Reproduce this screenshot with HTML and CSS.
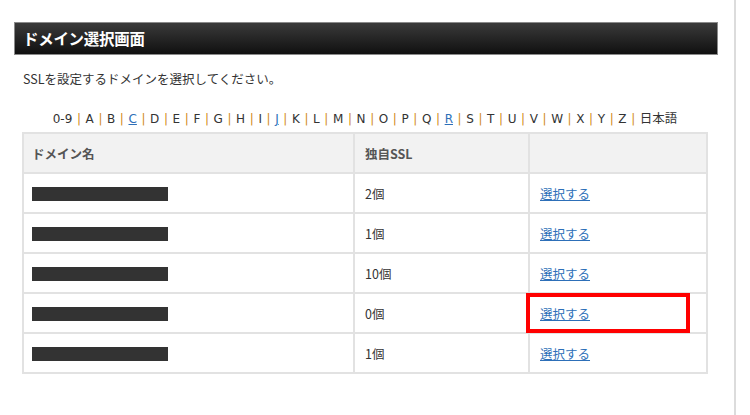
FILE: index.html
```html
<!DOCTYPE html>
<html lang="ja">
<head>
<meta charset="utf-8">
<title>ドメイン選択画面</title>
<link rel="stylesheet" href="styles.css">
</head>
<body>
<div class="page">
  <h1 class="title-bar">ドメイン選択画面</h1>
  <p class="lead">SSLを設定するドメインを選択してください。</p>
  <nav class="index-nav">
    <span>0-9</span><i>|</i><span>A</span><i>|</i><span>B</span><i>|</i><a href="#">C</a><i>|</i><span>D</span><i>|</i><span>E</span><i>|</i><span>F</span><i>|</i><span>G</span><i>|</i><span>H</span><i>|</i><span>I</span><i>|</i><a href="#">J</a><i>|</i><span>K</span><i>|</i><span>L</span><i>|</i><span>M</span><i>|</i><span>N</span><i>|</i><span>O</span><i>|</i><span>P</span><i>|</i><span>Q</span><i>|</i><a href="#">R</a><i>|</i><span>S</span><i>|</i><span>T</span><i>|</i><span>U</span><i>|</i><span>V</span><i>|</i><span>W</span><i>|</i><span>X</span><i>|</i><span>Y</span><i>|</i><span>Z</span><i>|</i><span>日本語</span>
  </nav>
  <table class="domain-table">
    <thead>
      <tr><th class="c1">ドメイン名</th><th class="c2">独自SSL</th><th class="c3"></th></tr>
    </thead>
    <tbody>
      <tr><td class="name"><span class="redact"></span></td><td>2個</td><td><a href="#">選択する</a></td></tr>
      <tr><td class="name"><span class="redact"></span></td><td>1個</td><td><a href="#">選択する</a></td></tr>
      <tr><td class="name"><span class="redact"></span></td><td>10個</td><td><a href="#">選択する</a></td></tr>
      <tr><td class="name"><span class="redact"></span></td><td>0個</td><td class="marked"><a href="#">選択する</a><span class="highlight"></span></td></tr>
      <tr><td class="name"><span class="redact"></span></td><td>1個</td><td><a href="#">選択する</a></td></tr>
    </tbody>
  </table>
</div>
</body>
</html>
```
FILE: styles.css
```css
html, body {
  margin: 0;
  padding: 0;
  background: #fff;
}
body {
  font-family: "DejaVu Sans", "Noto Sans CJK JP", sans-serif;
  color: #333;
  font-size: 13px;
}
.page {
  width: 736px;
  min-height: 415px;
  box-sizing: border-box;
  border-right: 2px solid #dcdcdc;
  padding: 22px 0 0 14px;
}
.title-bar {
  width: 704px;
  height: 33px;
  box-sizing: border-box;
  margin: 0;
  border: 1px solid #8a8a8a;
  background: linear-gradient(#3a3a3a, #101010);
  color: #fff;
  font-family: "Noto Sans CJK JP", sans-serif;
  font-size: 15.5px;
  font-weight: 700;
  line-height: 31px;
  padding-left: 8px;
  letter-spacing: -0.3px;
}
.lead {
  margin: 14px 0 0 9px;
  font-family: "Noto Sans CJK JP", sans-serif;
  font-size: 12.5px;
  line-height: 20px;
  color: #333;
}
.index-nav {
  width: 686px;
  margin: 19px 0 0 8px;
  text-align: center;
  font-size: 12px;
  line-height: 20px;
  color: #333;
  white-space: nowrap;
}
.index-nav i {
  font-style: normal;
  color: #d08a20;
  margin: 0 4.6px;
}
.index-nav span:last-child {
  font-family: "Noto Sans CJK JP", sans-serif;
  font-size: 12.5px;
}
.index-nav a {
  color: #2d6fb8;
}
.domain-table {
  width: 686px;
  margin: 3px 0 0 8px;
  border-collapse: collapse;
  border: 2px solid #e2e2e2;
  font-family: "Noto Sans CJK JP", sans-serif;
  font-size: 12.5px;
}
.domain-table th,
.domain-table td {
  border: 2px solid #e2e2e2;
  height: 38px;
  padding: 0 0 0 10px;
  text-align: left;
  vertical-align: middle;
}
.domain-table th.c1,
.domain-table td.name {
  padding-left: 8px;
}
.domain-table th {
  background: #f2f2f2;
  font-weight: 700;
  color: #555;
}
.c1 { width: 321px; }
.c2 { width: 163px; }
.domain-table td a {
  color: #2d6fb8;
}
.redact {
  display: block;
  width: 136px;
  height: 14px;
  margin-top: 2px;
  background: #333;
}
.marked {
  position: relative;
}
.highlight {
  position: absolute;
  left: -4px;
  top: -1px;
  width: 164px;
  height: 40px;
  box-sizing: border-box;
  border: 4px solid #f00;
}
```
